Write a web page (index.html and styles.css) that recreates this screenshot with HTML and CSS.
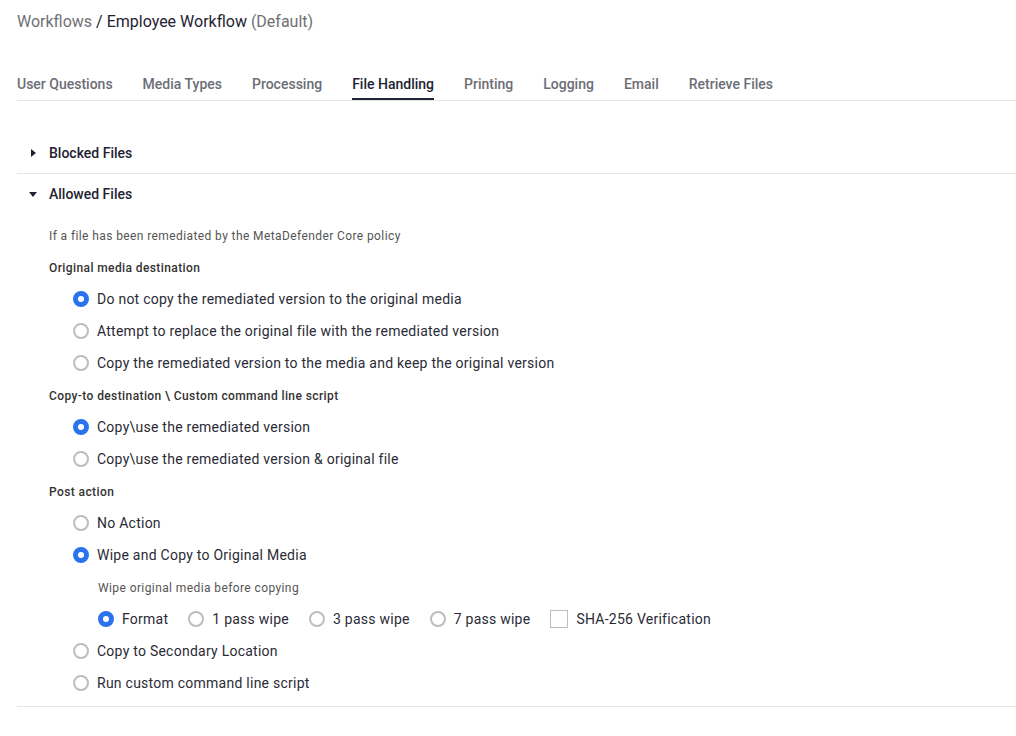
FILE: index.html
```html
<!DOCTYPE html>
<html lang="en">
<head>
    <meta charset="UTF-8">
    <meta name="viewport" content="width=device-width, initial-scale=1.0">
    <title>Employee Workflow - File Handling</title>
    <link rel="stylesheet" href="styles.css">
</head>
<body>
    <div id="page">
        <h1 class="crumb">
            <span class="crumb-muted">Workflows</span> / Employee Workflow <span class="crumb-muted">(Default)</span>
        </h1>
        <nav class="tabs">
            <a class="tab">User Questions</a>
            <a class="tab">Media Types</a>
            <a class="tab">Processing</a>
            <a class="tab active">File Handling</a>
            <a class="tab">Printing</a>
            <a class="tab">Logging</a>
            <a class="tab">Email</a>
            <a class="tab">Retrieve Files</a>
        </nav>

        <div class="section">
            <div class="section-head">
                <span class="caret caret-right"></span>
                <span>Blocked Files</span>
            </div>
        </div>

        <div class="section open">
            <div class="section-head">
                <span class="caret caret-down"></span>
                <span>Allowed Files</span>
            </div>
            <div class="section-body">
                <p class="note">If a file has been remediated by the MetaDefender Core policy</p>

                <p class="group-title">Original media destination</p>
                <label class="option"><span class="radio checked"></span>Do not copy the remediated version to the original media</label>
                <label class="option"><span class="radio"></span>Attempt to replace the original file with the remediated version</label>
                <label class="option"><span class="radio"></span>Copy the remediated version to the media and keep the original version</label>

                <p class="group-title">Copy-to destination \ Custom command line script</p>
                <label class="option"><span class="radio checked"></span>Copy\use the remediated version</label>
                <label class="option"><span class="radio"></span>Copy\use the remediated version &amp; original file</label>

                <p class="group-title">Post action</p>
                <label class="option"><span class="radio"></span>No Action</label>
                <label class="option"><span class="radio checked"></span>Wipe and Copy to Original Media</label>
                <div class="sub">
                    <p class="note">Wipe original media before copying</p>
                    <div class="inline-options">
                        <label class="option"><span class="radio checked"></span>Format</label>
                        <label class="option"><span class="radio"></span>1 pass wipe</label>
                        <label class="option"><span class="radio"></span>3 pass wipe</label>
                        <label class="option"><span class="radio"></span>7 pass wipe</label>
                        <label class="option"><span class="checkbox"></span>SHA-256 Verification</label>
                    </div>
                </div>
                <label class="option"><span class="radio"></span>Copy to Secondary Location</label>
                <label class="option"><span class="radio"></span>Run custom command line script</label>
            </div>
        </div>
    </div>
</body>
</html>
```

FILE: styles.css
```css
body {
    font-family: Roboto, "Liberation Sans", Arial, sans-serif;
    background-color: #fff;
    color: #22242e;
    margin: 0;
    padding: 0;
}
#page {
    padding-left: 17px;
}
.crumb {
    margin: 0;
    height: 44px;
    line-height: 44px;
    font-size: 16px;
    font-weight: 400;
    color: #1f2233;
}
.crumb-muted {
    color: #6f7075;
}
.tabs {
    display: flex;
    gap: 30px;
    border-bottom: 1px solid #e6e6e6;
}
.tab {
    padding-top: 30px;
    padding-bottom: 4px;
    line-height: 20px;
    font-size: 14px;
    font-weight: 500;
    color: #6b6e76;
    border-bottom: 2px solid transparent;
    cursor: pointer;
}
.tab.active {
    color: #1d2433;
    border-bottom-color: #1d2433;
}
.section {
    border-bottom: 1px solid #e6e6e6;
}
.tabs + .section {
    margin-top: 32px;
}
.section-head {
    display: flex;
    align-items: center;
    height: 40px;
    font-size: 14px;
    font-weight: 500;
    color: #1f2233;
}
.caret {
    width: 32px;
    display: flex;
    justify-content: center;
}
.caret::before {
    content: "";
    width: 0;
    height: 0;
    border-style: solid;
}
.caret-right::before {
    border-width: 4px 0 4px 5px;
    border-color: transparent transparent transparent #1f2233;
}
.caret-down::before {
    border-width: 5px 4px 0 4px;
    border-color: #1f2233 transparent transparent transparent;
}
.section-body {
    padding: 6px 0 6px 32px;
}
.note {
    margin: 0;
    line-height: 32px;
    font-size: 12px;
    letter-spacing: 0.4px;
    color: #555;
}
.group-title {
    margin: 0;
    line-height: 32px;
    font-size: 12px;
    font-weight: 500;
    letter-spacing: 0.4px;
    color: #333;
}
.option {
    box-sizing: border-box;
    display: flex;
    align-items: center;
    height: 32px;
    padding-left: 24px;
    padding-bottom: 2px;
    font-size: 14px;
    letter-spacing: 0.25px;
    color: #2a2b36;
    cursor: pointer;
}
.radio {
    box-sizing: border-box;
    flex-shrink: 0;
    width: 16px;
    height: 16px;
    margin-right: 8px;
    border: 2px solid #bdbdbd;
    border-radius: 50%;
}
.radio.checked {
    border: 5px solid #2a72ee;
    background: #fff;
}
.checkbox {
    box-sizing: border-box;
    flex-shrink: 0;
    width: 18px;
    height: 18px;
    margin-right: 8px;
    border: 1px solid #bdbdbd;
}
.sub {
    padding-left: 49px;
}
.inline-options {
    display: flex;
    gap: 20px;
}
.inline-options .option {
    padding-left: 0;
}
```
